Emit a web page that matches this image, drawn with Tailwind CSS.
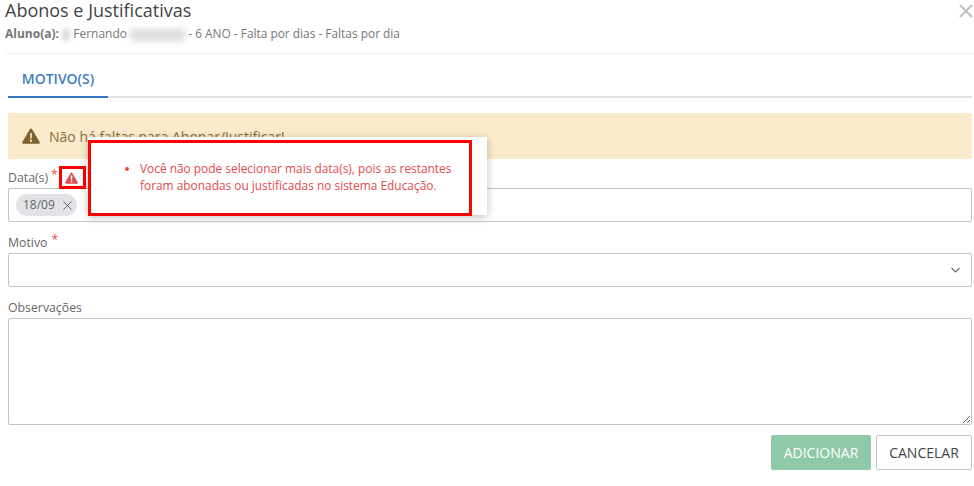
<!DOCTYPE html>
<html lang="en">
<head>
  <meta charset="UTF-8">
  <title>Abonos e Justificativas</title>
  <script src="https://cdn.jsdelivr.net/npm/@tailwindcss/browser@4"></script>
</head>
<body class="bg-white font-['Open_Sans',sans-serif] overflow-hidden">
  <div class="relative w-[974px] h-[486px] overflow-hidden">
    <!-- header -->
    <div class="h-[54px] ml-[5px] border-b border-[#f0f0f0] flex justify-between">
      <div>
        <h2 class="text-[18px] leading-[24px] -mt-[2px] text-[#444]">Abonos e Justificativas</h2>
        <p class="mt-[2px] text-[12px] leading-[18px] text-[#777]">
          <b class="font-bold">Aluno(a):</b>
          <span class="inline-block w-[8px] h-[12px] align-middle bg-[#ddd] blur-[2px]"></span> Fernando <span class="inline-block w-[55px] h-[12px] align-middle bg-[#ddd] blur-[3px]"></span> <span class="text-[11.9px]">- 6 ANO - Falta por dias - Faltas por dia</span>
        </p>
      </div>
      <svg class="mt-[4px] mr-[1px] w-[14px] h-[14px]" viewBox="0 0 14 14" fill="none" stroke="#c4c4c4" stroke-width="2.4"><path d="M1 1l12 12M13 1L1 13"/></svg>
    </div>

    <div class="pl-[8px] pr-[2px]">
      <!-- tabs -->
      <div class="border-b-2 border-[#e0e0e6] h-[44px]">
        <div class="w-[100px] h-[44px] border-b-2 border-[#3575c0] text-center text-[14px] font-semibold leading-[50px] text-[#3f7cc4]">MOTIVO(S)</div>
      </div>

      <!-- alert -->
      <div class="mt-[15px] h-[46px] bg-[#faebcc] flex items-center pl-[14px] gap-[9px] text-[14px] text-[#8a6d3b]">
        <svg class="w-[18px] h-[16px]" viewBox="0 0 19 17"><path fill="#7d6230" d="M9.5 0.5c.5 0 .9.3 1.2.8l8 13.600c.5.9-.1 1.900-1.200 1.900H1.500c-1.100 0-1.700-1-1.200-1.900l8-13.600c.3-.5.7-.8 1.200-.8z"/><path fill="#faebcc" d="M8.500 5.500h2l-.3 5.800H8.800zM8.400 12.600h2.200v2h-2.200z"/></svg>
        <span>Não há faltas para Abonar/Justificar!</span>
      </div>

      <!-- form -->
      <div class="mt-[9px] h-[20px] flex items-center text-[12.3px] font-medium text-[#666]">
        <span>Data(s)</span>
        <span class="ml-[3px] -mt-[5px] text-[#e24b4b]">*</span>
        <svg class="ml-[7px] w-[13px] h-[12px]" viewBox="0 0 19 17"><path fill="#e24b4b" d="M9.5 0.5c.5 0 .9.3 1.200.8l8 13.600c.5.9-.1 1.900-1.200 1.900H1.500c-1.100 0-1.700-1-1.200-1.900l8-13.600c.3-.5.7-.8 1.200-.8z"/><path fill="#fff" d="M8.300 5h2.400l-.3 6.300H8.600zM8.300 12.500h2.400v2.300H8.300z"/></svg>
      </div>
      <div class="h-[34px] border border-[#c4c4c4] rounded-[2px] flex items-center pl-[7px]">
        <span class="h-[22px] w-[61px] rounded-full bg-[#e2e3e7] flex items-center pl-[7px] text-[12px] text-[#666]">18/09<svg class="ml-[8px] w-[9px] h-[9px]" viewBox="0 0 9 9" fill="none" stroke="#666" stroke-width="1"><path d="M.5.5l8 8M8.500.5l-8 8"/></svg></span>
      </div>

      <div class="mt-[11px] h-[20px] flex items-center text-[12.3px] font-medium text-[#666]">
        <span>Motivo</span>
        <span class="ml-[4px] -mt-[5px] text-[#e24b4b]">*</span>
      </div>
      <div class="h-[34px] border border-[#c4c4c4] rounded-[2px] flex items-center justify-end pr-[11px]">
        <svg class="w-[9px] h-[6px]" viewBox="0 0 9 6" fill="none" stroke="#666" stroke-width="1.100"><path d="M.5 1l4 4 4-4"/></svg>
      </div>

      <div class="mt-[11px] h-[20px] flex items-center text-[12.3px] font-medium text-[#666]">Observações</div>
      <textarea class="block w-full h-[107px] border border-[#c4c4c4] rounded-[2px]"></textarea>

      <!-- actions -->
      <div class="mt-[10px] flex justify-end gap-[5px] text-[14px]">
        <button class="w-[100px] h-[35px] pb-[1px] rounded-[2px] bg-[#90c9a7] text-white">ADICIONAR</button>
        <button class="w-[96px] h-[35px] pb-[1px] rounded-[2px] bg-white border border-[#c4c4c4] text-[#444]">CANCELAR</button>
      </div>
    </div>

    <!-- tooltip + highlight boxes -->
    <div class="absolute left-[81px] top-[171px] w-[12px] h-[12px] rotate-45 bg-white border border-[#e4e4e4]"></div>
    <div class="absolute left-[59px] top-[166px] w-[27px] h-[23px] border-[3px] border-[#ff0000]"></div>
    <div class="absolute left-[88px] top-[137px] w-[399px] h-[78px] bg-white shadow-[0_2px_8px_rgba(0,0,0,0.25)]">
      <div class="mt-[3px] w-[384px] h-[76px] border-[3px] border-[#ff0000] pl-[49px] pt-[17px] text-[11.9px] leading-[17px] text-[#e24b4b]">
        <ul class="list-disc">
          <li>Você não pode selecionar mais data(s), pois as restantes foram abonadas ou justificadas no sistema Educação.</li>
        </ul>
      </div>
    </div>
  </div>
</body>
</html>
